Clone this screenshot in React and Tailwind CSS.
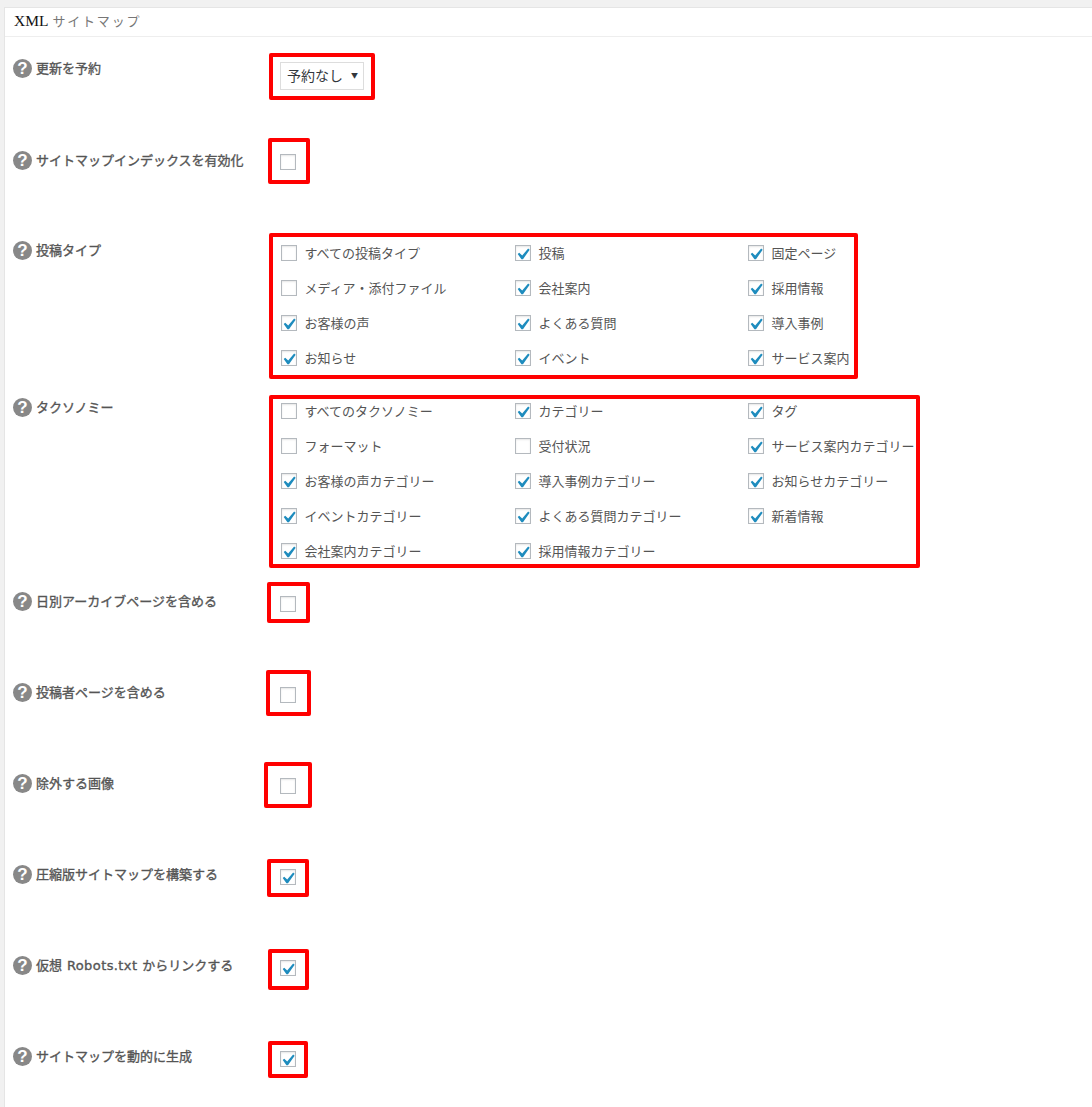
const font = { fontFamily: '"Noto Sans CJK JP", sans-serif' };

function Help() {
  return (
    <span className="w-[19px] h-[19px] rounded-full bg-[#888888] text-white flex items-center justify-center text-[17px] font-bold leading-none shrink-0 font-['Liberation_Sans',sans-serif]">
      ?
    </span>
  );
}

function Check({ on }) {
  return (
    <span className="w-4 h-4 border border-[#b4b9be] bg-white shadow-[inset_0_1px_2px_rgba(0,0,0,0.1)] shrink-0 flex items-center justify-center">
      {on && (
        <svg viewBox="3.43 1.76 13.9 13.9" className="w-4 h-4 shrink-0 overflow-visible">
          <path d="M14.83 4.89l1.34.94-5.81 8.38H9.02L5.78 9.67l1.34-1.25 2.57 2.4z" fill="#1e8cbe" />
        </svg>
      )}
    </span>
  );
}

function Item({ label, on }) {
  return (
    <div className="flex items-center gap-[7.5px] h-[35px] text-[13px] text-[#555555] whitespace-nowrap">
      <Check on={on} />
      <span>{label}</span>
    </div>
  );
}

function Row({ rowClass, label, boxClass, children }) {
  return (
    <div className={`flex ${rowClass}`}>
      <div className="w-[255px] pl-[8px] pt-[5px] shrink-0 flex items-start gap-1">
        <Help />
        <span className="text-[13px] text-[#555555] whitespace-nowrap leading-[18px] [-webkit-text-stroke:0.35px_#555555]">{label}</span>
      </div>
      <div className={`border-4 border-[#ff0000] rounded-[2px] ${boxClass}`}>{children}</div>
    </div>
  );
}

const types = [
  ["すべての投稿タイプ", false], ["投稿", true], ["固定ページ", true],
  ["メディア・添付ファイル", false], ["会社案内", true], ["採用情報", true],
  ["お客様の声", true], ["よくある質問", true], ["導入事例", true],
  ["お知らせ", true], ["イベント", true], ["サービス案内", true],
];
const taxes = [
  ["すべてのタクソノミー", false], ["カテゴリー", true], ["タグ", true],
  ["フォーマット", false], ["受付状況", false], ["サービス案内カテゴリー", true],
  ["お客様の声カテゴリー", true], ["導入事例カテゴリー", true], ["お知らせカテゴリー", true],
  ["イベントカテゴリー", true], ["よくある質問カテゴリー", true], ["新着情報", true],
  ["会社案内カテゴリー", true], ["採用情報カテゴリー", true],
];

export default function App() {
  return (
    <div style={font} className="h-[1107px] overflow-hidden bg-[#f1f1f1] pt-[7px] pl-[4px]">
      <div className="h-[1100px] bg-white border-t border-l border-[#e5e5e5]">
        <div className="h-[29px] border-b border-[#eeeeee] pl-[9px] pb-[2px] flex items-center font-['Liberation_Serif',serif]">
          <span className="text-[15.5px] text-[#111111] mr-[4px]">XML</span>
          <span className="text-[13px] tracking-[1.8px] text-[#777777]" style={font}>サイトマップ</span>
        </div>
        <div className="pt-[17px]">
          <Row rowClass="h-[92px]" label="更新を予約" boxClass="ml-[9px] -mt-[1px] w-[106px] h-[47px] pl-[7px] pt-[5px]">
            <div className="w-[84px] h-[28px] border border-[#dddddd] flex items-center justify-between pl-[6px] pr-[5px] pb-[2px] text-[14px] text-[#32373c]">
              <span>予約なし</span>
              <span className="text-[7px]">▼</span>
            </div>
          </Row>
          <Row rowClass="h-[90px]" label="サイトマップインデックスを有効化" boxClass="ml-[8px] -mt-[8px] w-[42px] h-[46px] pl-[8px] pt-[12px]">
            <Check />
          </Row>
          <Row rowClass="h-[157px]" label="投稿タイプ" boxClass="ml-[9px] -mt-[3px] w-[589px] h-[146px] pl-[8px]">
            <div className="-mt-[2px] grid grid-cols-[234px_233px_100px]">
              {types.map(([l, o]) => <Item key={l} label={l} on={o} />)}
            </div>
          </Row>
          <Row rowClass="h-[194px]" label="タクソノミー" boxClass="ml-[9px] mt-[2px] w-[651px] h-[173px] pl-[8px]">
            <div className="-mt-[6px] grid grid-cols-[234px_233px_150px]">
              {taxes.map(([l, o]) => <Item key={l} label={l} on={o} />)}
            </div>
          </Row>
          <Row rowClass="h-[91px]" label="日別アーカイブページを含める" boxClass="ml-[7px] -mt-[5px] w-[43px] h-[41px] pl-[9px] pt-[10px]">
            <Check />
          </Row>
          <Row rowClass="h-[91px]" label="投稿者ページを含める" boxClass="ml-[6px] -mt-[8px] w-[45px] h-[46px] pl-[10px] pt-[13px]">
            <Check />
          </Row>
          <Row rowClass="h-[91px]" label="除外する画像" boxClass="ml-[4px] -mt-[7px] w-[48px] h-[46px] pl-[12px] pt-[12px]">
            <Check />
          </Row>
          <Row rowClass="h-[91px]" label="圧縮版サイトマップを構築する" boxClass="ml-[7px] -mt-[1px] w-[42px] h-[38px] pl-[9px] pt-[6px]">
            <Check on />
          </Row>
          <Row rowClass="h-[91px]" label={<>仮想 <span className="font-[DejaVu_Sans,sans-serif] mx-[2px] tracking-[0.4px]">Robots.txt</span> からリンクする</>} boxClass="ml-[8px] -mt-[2px] w-[41px] h-[41px] pl-[8px] pt-[7px]">
            <Check on />
          </Row>
          <Row rowClass="h-[60px]" label="サイトマップを動的に生成" boxClass="ml-[8px] -mt-[1px] w-[40px] h-[37px] pl-[8px] pt-[6px]">
            <Check on />
          </Row>
        </div>
      </div>
    </div>
  );
}
